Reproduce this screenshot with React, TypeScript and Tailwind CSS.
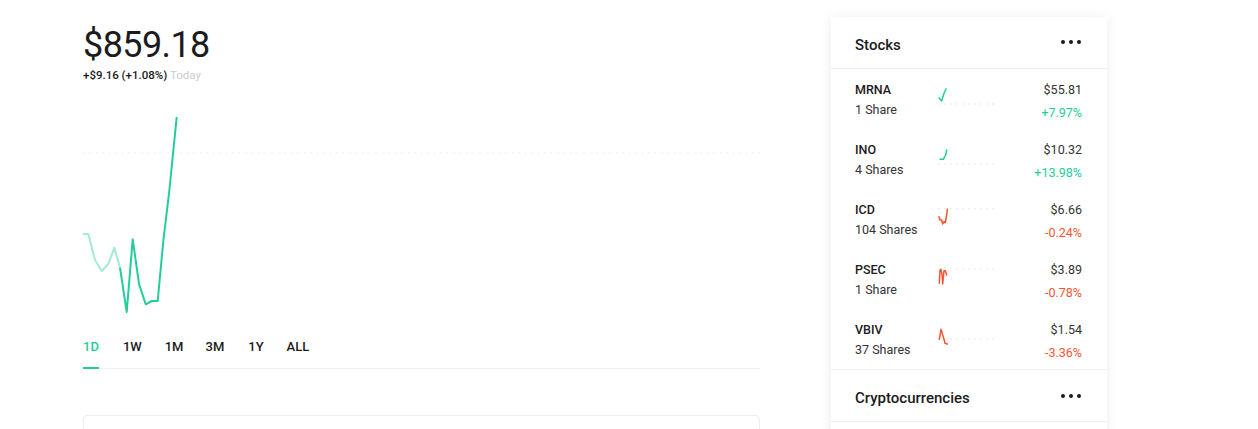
import React from 'react';

const GREEN = '#21ce99';
const RED = '#f45531';

type Stock = {
  ticker: string;
  shares: string;
  price: string;
  change: string;
  up: boolean;
  dotY: number;
  points: string;
};

const stocks: Stock[] = [
  { ticker: 'MRNA', shares: '1 Share', price: '$55.81', change: '+7.97%', up: true, dotY: 21, points: '1,15 3.7,18 6,10.3 8,6' },
  { ticker: 'INO', shares: '4 Shares', price: '$10.32', change: '+13.98%', up: true, dotY: 21, points: '2,16.3 5.3,16.3 7.7,12 8.7,7' },
  { ticker: 'ICD', shares: '104 Shares', price: '$6.66', change: '-0.24%', up: false, dotY: 5.7, points: '1,13.7 2,17 3.7,17 4.7,21 6,18.7 7.3,19.7 8.7,12 9.3,6.3' },
  { ticker: 'PSEC', shares: '1 Share', price: '$3.89', change: '-0.78%', up: false, dotY: 6, points: '1.3,20.3 2,7 3,6.3 4,12 4.7,21 6,7.7 7.3,7.7 8.7,12' },
  { ticker: 'VBIV', shares: '37 Shares', price: '$1.54', change: '-3.36%', up: false, dotY: 16, points: '1.3,16.3 3,6.3 4.7,12 6,16.3 7,20.3 9.3,21' },
];

function Sparkline({ stock }: { stock: Stock }) {
  return (
    <svg width="60" height="32" viewBox="0 0 60 32" className="mt-[14px] shrink-0">
      <line x1="0.5" y1={stock.dotY} x2="58" y2={stock.dotY} stroke="#d6d6d6" strokeWidth="1" strokeDasharray="1 5" />
      <polyline
        points={stock.points}
        fill="none"
        stroke={stock.up ? GREEN : RED}
        strokeWidth="1.5"
        strokeLinejoin="round"
        strokeLinecap="round"
      />
    </svg>
  );
}

function Dots() {
  return (
    <div className="flex gap-[4px]">
      <span className="size-[4px] rounded-full bg-[#1b1b1d]" />
      <span className="size-[4px] rounded-full bg-[#1b1b1d]" />
      <span className="size-[4px] rounded-full bg-[#1b1b1d]" />
    </div>
  );
}

const tabs = [
  { label: '1D', gap: 'mr-[24px]' },
  { label: '1W', gap: 'mr-[23px]' },
  { label: '1M', gap: 'mr-[22px]' },
  { label: '3M', gap: 'mr-[24px]' },
  { label: '1Y', gap: 'mr-[23px]' },
  { label: 'ALL', gap: '' },
];

export default function App() {
  return (
    <div
      className="flex h-[429px] w-[1258px] overflow-hidden bg-white pl-[83px] text-[#1b1b1d]"
      style={{ fontFamily: 'Roboto, "Liberation Sans", sans-serif' }}
    >
      <div className="flex w-[677px] shrink-0 flex-col pt-[23px]">
        <div className="shrink-0 text-[36px] leading-[44px] tracking-[-0.6px]">$859.18</div>
        <div className="shrink-0 text-[11.5px] leading-[16px]">
          <span className="font-medium">+$9.16 (+1.08%)</span>{' '}
          <span className="text-[#cbcbcd]">Today</span>
        </div>
        <svg width="677" height="232" viewBox="0 0 677 232" className="mt-[18px] block shrink-0">
          <line x1="0" y1="52" x2="677" y2="52" stroke="#e3e3e3" strokeWidth="1" strokeDasharray="1 5.5" />
          <polyline
            points="0,133 5.3,133 12,159 18.7,170 25.3,163 31.3,146.7 37,166.7"
            fill="none"
            stroke="#a3ebd5"
            strokeWidth="2"
            strokeLinejoin="round"
          />
          <polyline
            points="37,166.7 43.7,211 49.7,138.3 56,182.7 62.7,203.3 68.7,200 74.7,200 80.3,140 86.3,90 93.7,16"
            fill="none"
            stroke={GREEN}
            strokeWidth="2"
            strokeLinejoin="round"
          />
        </svg>
        <div className="mt-[5px] flex shrink-0 border-b border-[#eeeeee]">
          {tabs.map((t, i) => (
            <div
              key={t.label}
              className={`relative pb-[12px] text-[13px] font-medium leading-[18px] ${i === 0 ? 'text-[#21ce99]' : ''} ${t.gap}`}
            >
              {t.label}
              {i === 0 && <span className="absolute bottom-[-1px] left-0 h-[2px] w-full bg-[#21ce99]" />}
            </div>
          ))}
        </div>
        <div className="mt-[46px] h-[40px] shrink-0 rounded-[4px] border border-[#eeeeee]" />
      </div>

      <div className="ml-[71px] mt-[17px] w-[276px] shrink-0 self-start bg-white shadow-[0_2px_12px_rgba(0,0,0,0.08)]">
        <div className="flex h-[52px] items-center justify-between border-b border-[#f0f0f0] px-[24px] pr-[26px]">
          <span className="mt-[6px] text-[15px] font-medium">Stocks</span>
          <div className="-mt-[2px]">
            <Dots />
          </div>
        </div>
        {stocks.map((s) => (
          <div key={s.ticker} className="flex h-[60px] pl-[24px] pr-[25px]">
            <div className="w-[83px] shrink-0 pt-[12px]">
              <div className="text-[12.5px] font-medium leading-[18px]">{s.ticker}</div>
              <div className="mt-[2px] text-[12.5px] leading-[18px] text-[#333]">{s.shares}</div>
            </div>
            <Sparkline stock={s} />
            <div className="ml-auto flex flex-col items-end pt-[12px]">
              <div className="text-[12.5px] leading-[18px] text-[#333]">{s.price}</div>
              <div className={`mt-[5px] text-[12.5px] leading-[18px] ${s.up ? 'text-[#21ce99]' : 'text-[#f45531]'}`}>
                {s.change}
              </div>
            </div>
          </div>
        ))}
        <div className="flex h-[53px] items-center justify-between border-t border-b border-[#f0f0f0] px-[24px] pr-[26px]">
          <span className="mt-[6px] text-[15px] font-medium">Cryptocurrencies</span>
          <div className="mt-[1px]">
            <Dots />
          </div>
        </div>
        <div className="h-[20px]" />
      </div>
    </div>
  );
}
